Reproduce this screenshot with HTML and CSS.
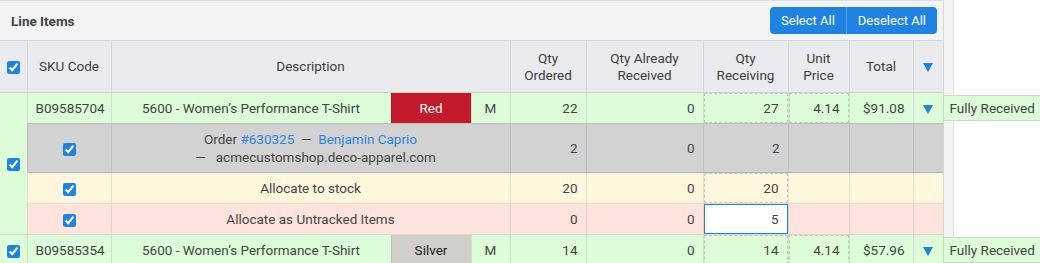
FILE: index.html
```html
<!DOCTYPE html>
<html lang="en">
<head>
  <meta charset="utf-8">
  <title>Line Items</title>
  <link rel="stylesheet" href="styles.css">
</head>
<body>
<div class="li-page">
<div class="li-card">
  <div class="li-head">
    <h2 class="li-title">Line Items</h2>
    <div class="li-btns">
      <button class="li-btn" type="button">Select All</button>
      <button class="li-btn" type="button">Deselect All</button>
    </div>
  </div>
  <table class="li-table">
    <colgroup>
      <col style="width:27px">
      <col style="width:84px">
      <col style="width:280px">
      <col style="width:80px">
      <col style="width:39px">
      <col style="width:76px">
      <col style="width:117px">
      <col style="width:85px">
      <col style="width:61px">
      <col style="width:64px">
      <col style="width:30px">
    </colgroup>
    <thead>
      <tr>
        <th><input class="li-check" type="checkbox" checked></th>
        <th>SKU Code</th>
        <th colspan="3">Description</th>
        <th>Qty<br>Ordered</th>
        <th>Qty Already<br>Received</th>
        <th>Qty<br>Receiving</th>
        <th>Unit<br>Price</th>
        <th>Total</th>
        <th><svg class="li-arrow" width="10" height="9" viewBox="0 0 10 9"><polygon points="0,0 10,0 5,9"/></svg></th>
      </tr>
    </thead>
    <tbody>
      <tr class="li-row li-row--done">
        <td class="li-side" rowspan="4"><input class="li-check" type="checkbox" checked></td>
        <td>B09585704</td>
        <td>5600 - Women’s Performance T-Shirt</td>
        <td class="li-color li-color--red">Red</td>
        <td>M</td>
        <td class="li-num">22</td>
        <td class="li-num">0</td>
        <td class="li-cell-input"><input class="li-qty" type="text" value="27"></td>
        <td class="li-cell-input"><input class="li-qty" type="text" value="4.14"></td>
        <td class="li-num">$91.08</td>
        <td class="li-menu">
          <svg class="li-arrow" width="10" height="9" viewBox="0 0 10 9"><polygon points="0,0 10,0 5,9"/></svg>
          <span class="li-badge">Fully Received</span>
        </td>
      </tr>
      <tr class="li-row li-row--order">
        <td><input class="li-check" type="checkbox" checked></td>
        <td colspan="3" class="li-order">Order <a href="#">#630325</a> &nbsp;—&nbsp; <a href="#">Benjamin Caprio</a><br>&nbsp;&nbsp;&nbsp;—&nbsp;&nbsp; acmecustomshop.deco-apparel.com</td>
        <td class="li-num">2</td>
        <td class="li-num">0</td>
        <td class="li-num">2</td>
        <td></td>
        <td></td>
        <td></td>
      </tr>
      <tr class="li-row li-row--stock">
        <td><input class="li-check" type="checkbox" checked></td>
        <td colspan="3">Allocate to stock</td>
        <td class="li-num">20</td>
        <td class="li-num">0</td>
        <td class="li-cell-input"><input class="li-qty" type="text" value="20"></td>
        <td></td>
        <td></td>
        <td></td>
      </tr>
      <tr class="li-row li-row--untracked">
        <td><input class="li-check" type="checkbox" checked></td>
        <td colspan="3">Allocate as Untracked Items</td>
        <td class="li-num">0</td>
        <td class="li-num">0</td>
        <td class="li-cell-input"><input class="li-qty li-qty--active" type="text" value="5"></td>
        <td></td>
        <td></td>
        <td></td>
      </tr>
      <tr class="li-row li-row--done li-row--next">
        <td class="li-side"><input class="li-check" type="checkbox" checked></td>
        <td>B09585354</td>
        <td>5600 - Women’s Performance T-Shirt</td>
        <td class="li-color li-color--silver">Silver</td>
        <td>M</td>
        <td class="li-num">14</td>
        <td class="li-num">0</td>
        <td class="li-cell-input"><input class="li-qty" type="text" value="14"></td>
        <td class="li-cell-input"><input class="li-qty" type="text" value="4.14"></td>
        <td class="li-num">$57.96</td>
        <td class="li-menu">
          <svg class="li-arrow" width="10" height="9" viewBox="0 0 10 9"><polygon points="0,0 10,0 5,9"/></svg>
          <span class="li-badge">Fully Received</span>
        </td>
      </tr>
    </tbody>
  </table>
</div>
</div>
</body>
</html>
```

FILE: styles.css
```css
:root {
  --ink: #444;
  --blue: #1e83e3;
  --link: #2a85dc;
  --head: #f2f3f5;
  --thead: #e9ebee;
  --line: #d6d6d6;
  --green: #dcfdd8;
  --gray: #d2d2d2;
  --yellow: #fff6de;
  --pink: #ffe4dd;
}
html, body {
  height: 100%;
}
body {
  margin: 0;
  font-family: Roboto, "Liberation Sans", sans-serif;
  font-size: 13.5px;
  color: var(--ink);
  background: #fff;
}
.li-page {
  width: 954px;
  height: 100%;
  box-sizing: border-box;
  background: var(--head);
  border-right: 1px solid #e1e3e6;
}
.li-card {
  width: 944px;
  box-sizing: border-box;
  border-top: 1px solid #dcdde0;
  border-right: 1px solid var(--line);
  background: var(--head);
}
.li-head {
  display: flex;
  align-items: center;
  justify-content: space-between;
  height: 39px;
  padding: 0 6px 0 11px;
  border-bottom: 1px solid var(--line);
}
.li-title {
  margin: 0;
  font-size: 13.5px;
  font-weight: 700;
  color: var(--ink);
}
.li-btns {
  display: flex;
}
.li-btn {
  height: 27px;
  padding: 0 11px;
  border: 0;
  background: var(--blue);
  color: #fff;
  font-family: inherit;
  font-size: 13px;
  cursor: pointer;
}
.li-btn:first-child {
  border-radius: 4px 0 0 4px;
  border-right: 1px solid #5aa6ec;
}
.li-btn:last-child {
  border-radius: 0 4px 4px 0;
}

.li-table {
  width: 943px;
  table-layout: fixed;
  border-collapse: collapse;
}
.li-table th {
  height: 51px;
  padding: 0 6px;
  background: var(--thead);
  border-left: 1px solid var(--line);
  border-bottom: 1px solid #cfcfcf;
  font-weight: 400;
  line-height: 17px;
  text-align: center;
  color: #3d3d3d;
}
.li-table th:first-child {
  border-left: 0;
}
.li-table td {
  height: 30px;
  padding: 0 8px;
  text-align: center;
  line-height: 18px;
  border-left: 1px solid rgba(0, 0, 0, 0.09);
  border-bottom: 1px solid rgba(0, 0, 0, 0.09);
}
.li-table td.li-side {
  padding: 0;
  border-left: 0;
  background: var(--green);
  border-bottom: 1px solid #d6d6d6;
}
.li-check {
  width: 13px;
  height: 13px;
  margin: 0;
  vertical-align: middle;
  accent-color: var(--blue);
}
.li-num {
  text-align: right !important;
}
.li-cell-input {
  padding: 0 !important;
}
.li-qty {
  display: block;
  width: 100%;
  height: 30px;
  box-sizing: border-box;
  padding: 0 8px;
  margin: 0;
  border: 1px dashed #c4c4c4;
  background: transparent;
  font-family: inherit;
  font-size: 13.5px;
  color: var(--ink);
  text-align: right;
  outline: none;
}
.li-qty--active {
  border: 1px solid var(--blue);
  background: #fff;
}
.li-row--done td {
  background: var(--green);
}
.li-row--done td.li-color--red {
  background: #c2192b;
  color: #fff;
}
.li-row--done td.li-color--silver {
  background: #d0cfca;
  color: #222;
}
.li-row--done:first-child td {
  border-bottom-color: #bdbdbd;
}
.li-row--done:first-child td.li-side {
  border-bottom-color: #d6d6d6;
}
.li-row--order td {
  height: 48px;
  background: var(--gray);
  border-bottom: 1px solid #b4b4b4;
}
.li-row--order a {
  color: var(--link);
  text-decoration: none;
}
.li-row--stock td {
  background: var(--yellow);
}
.li-row--untracked td {
  background: var(--pink);
  border-bottom-color: #d8d8d8;
}
.li-arrow {
  display: inline-block;
  vertical-align: middle;
  fill: var(--blue);
}
.li-menu {
  position: relative;
  padding: 0 !important;
  overflow: visible;
}
.li-badge {
  position: absolute;
  left: 29px;
  top: 2px;
  height: 24px;
  padding: 0 5px 0 6px;
  line-height: 24px;
  white-space: nowrap;
  background: #ddfdd8;
  border: 1px solid #c5dcc2;
  color: var(--ink);
  font-size: 13.5px;
}
```
